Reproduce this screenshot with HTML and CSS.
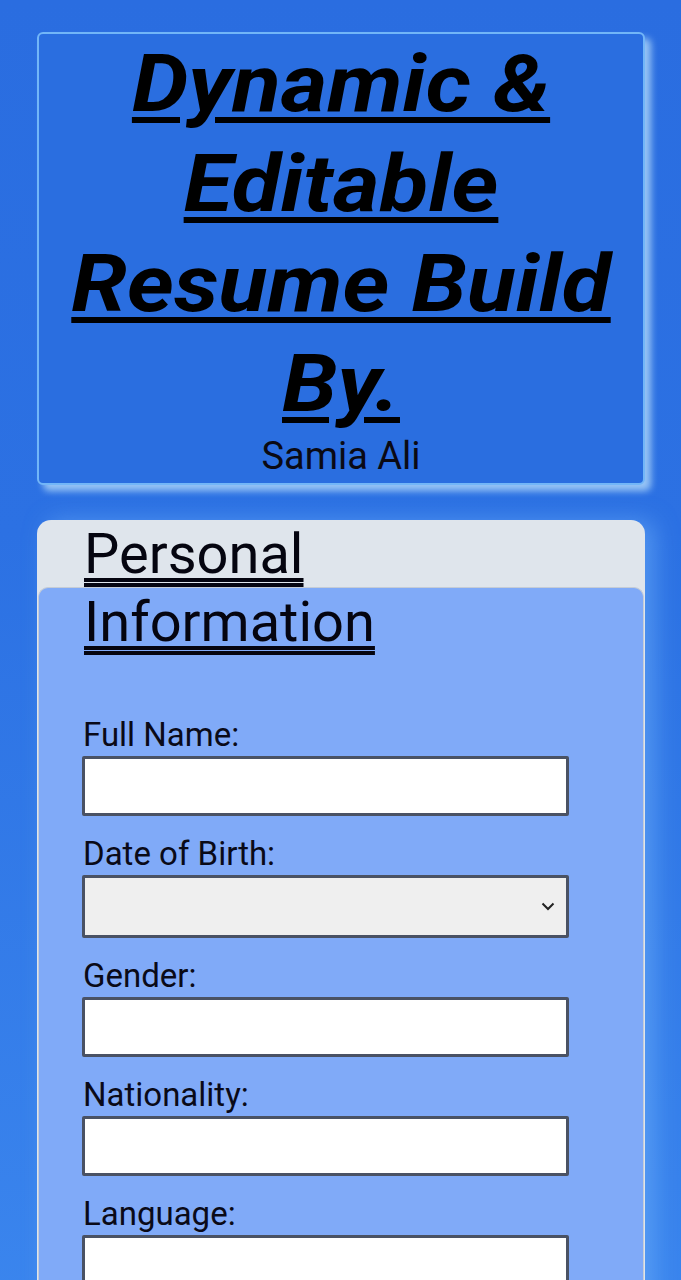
FILE: index.html
```html
<!DOCTYPE html>
<html lang="en">
<head>
<meta charset="utf-8">
<title>Dynamic &amp; Editable Resume Builder</title>
<link rel="stylesheet" href="styles.css">
</head>
<body>
  <header class="hero">
    <h1 class="hero-title">Dynamic &amp; Editable Resume Build By.</h1>
    <p class="hero-author">Samia Ali</p>
  </header>

  <section class="card">
    <h2 class="card-title">Personal Information</h2>
    <div class="panel">
      <div class="field">
        <label class="field-label" for="name">Full Name:</label>
        <input class="field-input" id="name" type="text">
      </div>
      <div class="field">
        <label class="field-label" for="dob">Date of Birth:</label>
        <div class="select-wrap">
          <select class="field-select" id="dob"><option></option></select>
          <svg class="chevron" width="14" height="9" viewBox="0 0 14 9"><path d="M1.5 1.5 L7 7 L12.5 1.5" fill="none" stroke="#222" stroke-width="2"/></svg>
        </div>
      </div>
      <div class="field">
        <label class="field-label" for="gender">Gender:</label>
        <input class="field-input" id="gender" type="text">
      </div>
      <div class="field">
        <label class="field-label" for="nat">Nationality:</label>
        <input class="field-input" id="nat" type="text">
      </div>
      <div class="field">
        <label class="field-label" for="lang">Language:</label>
        <input class="field-input" id="lang" type="text">
      </div>
    </div>
  </section>
</body>
</html>
```
FILE: styles.css
```css
html {
  background: linear-gradient(180deg, #2a6de0 0%, #2c71e3 40%, #3b86ee 100%);
  min-height: 100%;
}
body {
  margin: 0;
  font-family: Roboto, "Liberation Sans", sans-serif;
  color: #000;
  padding-top: 32px;
}
.hero {
  box-sizing: border-box;
  width: 608px;
  margin: 0 0 0 37px;
  background: #2a6ee0;
  border: 2px solid #72b6f8;
  border-radius: 6px;
  box-shadow: 6px 6px 7px rgba(170, 212, 248, 0.85);
  text-align: center;
  padding: 0 0 5px;
}
.hero-title {
  width: 540px;
  margin: 0 auto;
  font-size: 80px;
  line-height: 100px;
  font-weight: 700;
  font-style: italic;
  text-decoration: underline;
  text-decoration-thickness: 6px;
  text-underline-offset: 6px;
  transform: scaleX(1.12);
}
.hero-author {
  margin: 0;
  font-size: 38px;
  line-height: 44px;
  color: #0a0a14;
}
.card {
  box-sizing: border-box;
  width: 608px;
  margin: 35px 0 0 37px;
  background: #dfe5ec;
  border-radius: 14px 14px 0 0;
  box-shadow: 10px 0 22px rgba(110, 175, 250, 0.55);
}
.card-title {
  margin: 0;
  padding-left: 47px;
  max-width: 330px;
  font-size: 56px;
  line-height: 68px;
  font-weight: 400;
  color: #050510;
  text-decoration: underline double;
  text-decoration-thickness: 4px;
  text-underline-offset: 5px;
}
.panel {
  margin: -69px 1px 0;
  background: #80aaf8;
  border: 1.5px solid #c5ccd6;
  border-bottom: none;
  border-radius: 10px 10px 0 0;
  padding: 129px 0 40px 43px;
  display: flex;
  flex-direction: column;
  gap: 20px;
}
.field {
  display: flex;
  flex-direction: column;
  gap: 3px;
}
.field-label {
  font-size: 33px;
  line-height: 36px;
  color: #0a0a18;
  padding-left: 1px;
}
.field-input,
.field-select {
  box-sizing: border-box;
  width: 487px;
  height: 60px;
  margin: 0;
  border: 3px solid #4a5264;
  border-radius: 2px;
  background: #fff;
  font: inherit;
}
.select-wrap {
  position: relative;
  width: 487px;
}
.field-select {
  height: 63px;
  background: #efefef;
  appearance: none;
  -webkit-appearance: none;
  display: block;
}
.chevron {
  position: absolute;
  left: 459px;
  top: 27px;
}
```
